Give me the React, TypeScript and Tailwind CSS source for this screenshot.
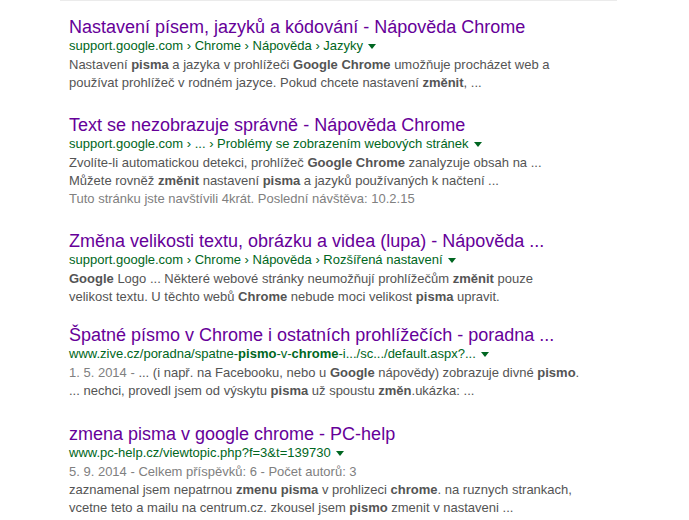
type Part = string | { b: string } | { g: string };

interface Result {
  title: string;
  url: Part[];
  lines: Part[][];
  gap: string;
}

const results: Result[] = [
  {
    title: 'Nastavení písem, jazyků a kódování - Nápověda Chrome',
    url: ['support.google.com › Chrome › Nápověda › Jazyky'],
    lines: [
      ['Nastavení ', { b: 'pisma' }, ' a jazyka v prohlížeči ', { b: 'Google Chrome' }, ' umožňuje procházet web a'],
      ['používat prohlížeč v rodném jazyce. Pokud chcete nastavení ', { b: 'změnit' }, ', ...'],
    ],
    gap: 'mt-0',
  },
  {
    title: 'Text se nezobrazuje správně - Nápověda Chrome',
    url: ['support.google.com › ... › Problémy se zobrazením webových stránek'],
    lines: [
      ['Zvolíte-li automatickou detekci, prohlížeč ', { b: 'Google Chrome' }, ' zanalyzuje obsah na ...'],
      ['Můžete rovněž ', { b: 'změnit' }, ' nastavení ', { b: 'pisma' }, ' a jazyků používaných k načtení ...'],
      [{ g: 'Tuto stránku jste navštívili 4krát. Poslední návštěva: 10.2.15' }],
    ],
    gap: 'mt-[23px]',
  },
  {
    title: 'Změna velikosti textu, obrázku a videa (lupa) - Nápověda ...',
    url: ['support.google.com › Chrome › Nápověda › Rozšířená nastavení'],
    lines: [
      [{ b: 'Google' }, ' Logo ... Některé webové stránky neumožňují prohlížečům ', { b: 'změnit' }, ' pouze'],
      ['velikost textu. U těchto webů ', { b: 'Chrome' }, ' nebude moci velikost ', { b: 'pisma' }, ' upravit.'],
    ],
    gap: 'mt-[23px]',
  },
  {
    title: 'Špatné písmo v Chrome i ostatních prohlížečích - poradna ...',
    url: ['www.zive.cz/poradna/spatne-', { b: 'pismo' }, '-v-', { b: 'chrome' }, '-i.../sc.../default.aspx?...'],
    lines: [
      [{ g: '1. 5. 2014 - ' }, '... (i např. na Facebooku, nebo u ', { b: 'Google' }, ' nápovědy) zobrazuje divné ', { b: 'pismo' }, '.'],
      ['... nechci, provedl jsem od výskytu ', { b: 'pisma' }, ' už spoustu ', { b: 'změn' }, '.ukázka: ...'],
    ],
    gap: 'mt-[19px]',
  },
  {
    title: 'zmena pisma v google chrome - PC-help',
    url: ['www.pc-help.cz/viewtopic.php?f=3&t=139730'],
    lines: [
      [{ g: '5. 9. 2014 - Celkem příspěvků: 6 - Počet autorů: 3' }],
      ['zaznamenal jsem nepatrnou ', { b: 'zmenu pisma' }, ' v prohlizeci ', { b: 'chrome' }, '. na ruznych strankach,'],
      ['vcetne teto a mailu na centrum.cz. zkousel jsem ', { b: 'pismo' }, ' zmenit v nastaveni ...'],
    ],
    gap: 'mt-[24px]',
  },
];

function renderParts(parts: Part[]) {
  return parts.map((p, i) => {
    if (typeof p === 'string') return <span key={i}>{p}</span>;
    if ('b' in p) return <b key={i} className="font-bold">{p.b}</b>;
    return <span key={i} className="text-[#808080]">{p.g}</span>;
  });
}

export default function App() {
  return (
    <div className="w-[689px] h-[520px] bg-white overflow-hidden" style={{ fontFamily: '"Liberation Sans", Arial, sans-serif' }}>
      <div className="ml-[60px] w-[557px] h-px bg-[#ebebeb]" />
      <div className="pl-[69px] pt-[16px] flex flex-col">
        {results.map((r, i) => (
          <div key={i} className={`whitespace-nowrap ${r.gap}`}>
            <div className="text-[18px] leading-[21px] text-[#660099]">{r.title}</div>
            <div className="text-[13px] leading-[16px] text-[#006621] flex items-center">
              <span>{renderParts(r.url)}</span>
              <span className="ml-[5px] inline-block w-0 h-0 border-l-[4px] border-r-[4px] border-t-[5px] border-l-transparent border-r-transparent border-t-[#006621] mt-[1px]" />
            </div>
            <div className="mt-[2px] text-[13px] leading-[18px] text-[#545454]">
              {r.lines.map((l, j) => (
                <div key={j}>{renderParts(l)}</div>
              ))}
            </div>
          </div>
        ))}
      </div>
    </div>
  );
}
